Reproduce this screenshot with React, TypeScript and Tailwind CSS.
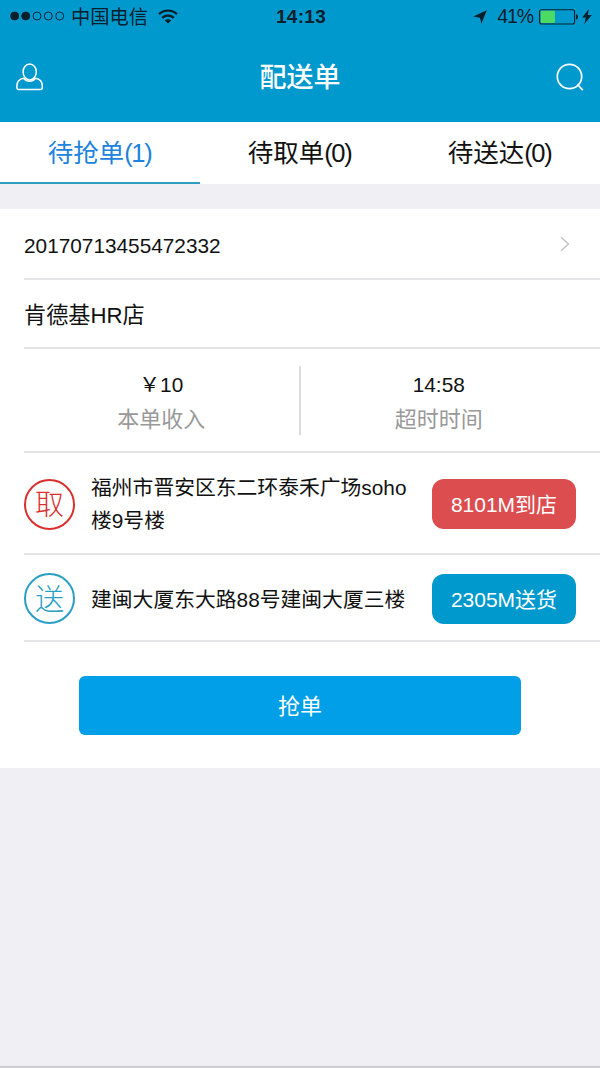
import type { ReactNode } from "react";

const tabs = [
    { name: "待抢单", count: 1 },
    { name: "待取单", count: 0 },
    { name: "待送达", count: 0 },
];

function StatusBar() {
    return (
        <div className="h-[33px] flex flex-row items-center justify-between pl-[10px] pr-[8px] text-[#06202c]">
            <div className="flex-1 flex flex-row items-center">
                <svg width="56" height="12" viewBox="0 0 56 12" fill="none" stroke="currentColor" strokeWidth="0.9">
                    <circle cx="4.7" cy="6" r="4" fill="currentColor" />
                    <circle cx="15.7" cy="6" r="4" fill="currentColor" />
                    <circle cx="27" cy="6" r="4" />
                    <circle cx="38.3" cy="6" r="4" />
                    <circle cx="49.7" cy="6" r="4" />
                </svg>
                <span className="ml-[5px] pt-[2px] text-[19.3px] leading-none">中国电信</span>
                <svg className="ml-[10px]" width="20" height="15" viewBox="0 0 20 15" fill="none" stroke="currentColor" strokeWidth="2.4">
                    <path d="M1 5.2C6 .4 14 .4 19 5.2" />
                    <path d="M4.2 8.8c3.3-3.1 8.3-3.1 11.6 0" />
                    <path d="M10 14.6l-3.2-3.2c1.8-1.7 4.6-1.7 6.4 0z" fill="currentColor" stroke="none" />
                </svg>
            </div>
            <span className="text-[19px] leading-none font-bold tracking-[0.3px]">14:13</span>
            <div className="flex-1 flex flex-row items-center justify-end">
                <svg width="14" height="14" viewBox="0 0 14 14" fill="currentColor">
                    <path d="M13.8.2L8.4 13.8 7 7.8.2 6.4z" />
                </svg>
                <span className="ml-[10px] pt-px text-[19.5px] leading-none tracking-[-1.1px]">41%</span>
                <svg className="ml-[6px]" width="40" height="16" viewBox="0 0 40 16">
                    <rect x="0.6" y="0.8" width="35" height="14.2" rx="2" fill="none" stroke="currentColor" strokeWidth="1.1" />
                    <rect x="1.7" y="1.8" width="14.3" height="12.2" rx="1" fill="#4cd964" />
                    <path d="M37 5.2c2.6 0 2.6 5.4 0 5.4z" fill="currentColor" />
                </svg>
                <svg className="ml-[3px]" width="10" height="15" viewBox="0 0 10 15" fill="currentColor">
                    <path d="M6.8.1L.2 8.5h3.6L2.3 14.9 9.8 6H5.8z" />
                </svg>
            </div>
        </div>
    );
}

function Header() {
    return (
        <div className="h-[122px] bg-[#0099ce]">
            <StatusBar />
            <div className="h-[89px] flex flex-row items-center justify-between px-[16px] text-white">
                <svg className="mb-[2px]" width="28" height="28" viewBox="0 0 28 28" fill="none" stroke="currentColor" strokeWidth="1.5" strokeLinejoin="round">
                    <ellipse cx="13.7" cy="8.9" rx="6.6" ry="8" />
                    <path d="M7.7 15.2C3.2 15.9.9 18.6.9 23v1.6c0 1.300.7 2 2 2h21.400c1.300 0 2-.7 2-2V23c0-4.400-2.300-7.100-6.800-7.800-3 4-8.700 4-11.800 0z" />
                </svg>
                <h1 className="pt-[2px] text-[27px] leading-none font-medium">配送单</h1>
                <svg className="mb-[2px]" width="28" height="28" viewBox="0 0 28 28" fill="none" stroke="currentColor" strokeWidth="1.7">
                    <circle cx="13.5" cy="13.5" r="12.2" />
                    <path d="M21.500 21.500l5.300 5.600" />
                </svg>
            </div>
        </div>
    );
}

function Row({ className, children }: { className: string; children: ReactNode }) {
    return (
        <div className={`ml-[24px] pr-[24px] flex flex-row items-center border-b-2 border-[#e4e4e6] ${className}`}>
            {children}
        </div>
    );
}

function Stat({ value, label }: { value: string; label: string }) {
    return (
        <div className="flex-1 flex flex-col items-center pt-[5px]">
            <p className="text-[20.8px] leading-[34px]">{value}</p>
            <p className="pt-px text-[22px] leading-[34px] text-[#999999]">{label}</p>
        </div>
    );
}

export default function App() {
    return (
        <div className="w-[600px] h-[1068px] flex flex-col bg-[#efeff4] border-b-2 border-[#cbcbd0] text-[#111111] font-['Liberation_Sans','Noto_Sans_CJK_SC',sans-serif]">
            <Header />

            <div className="h-[62px] flex flex-row bg-white">
                {tabs.map((tab, i) => (
                    <div
                        key={tab.name}
                        className={`flex-1 flex flex-row items-center justify-center pt-[4px] pr-px border-b-2 text-[25.5px] leading-none ${i === 0 ? "text-[#1d83dc] border-[#2f9dbf]" : "border-white"}`}
                    >
                        <span>{tab.name}</span>
                        <span className="tracking-[-1.4px]">({tab.count})</span>
                    </div>
                ))}
            </div>

            <div className="mt-[25px] h-[559px] bg-white flex flex-col">
                <Row className="h-[71px] justify-between">
                    <span className="pt-[4px] text-[20.8px]">20170713455472332</span>
                    <svg className="mr-[6px]" width="10" height="16" viewBox="0 0 10 16" fill="none" stroke="#c4c4c8" strokeWidth="1.5">
                        <path d="M1 1.2l7.5 6.800L1 14.800" />
                    </svg>
                </Row>
                <Row className="h-[69px]">
                    <span className="pt-[5px] text-[22.2px]">肯德基HR店</span>
                </Row>
                <Row className="h-[104px]">
                    <Stat value="￥10" label="本单收入" />
                    <div className="w-[2px] h-[69px] mr-px mt-px bg-[#dcdcde]" />
                    <Stat value="14:58" label="超时时间" />
                </Row>
                <Row className="h-[102px]">
                    <div className="w-[51px] h-[51px] mt-[2px] shrink-0 rounded-full border-2 border-[#d9302f] text-[#d9302f] text-[29px] font-light leading-none flex items-center justify-center pt-[3px]">取</div>
                    <p className="ml-[16px] pt-[2px] w-[320px] text-[20.8px] leading-[33px]">福州市晋安区东二环泰禾广场soho楼9号楼</p>
                    <button type="button" className="ml-auto mt-[2px] pt-px w-[144px] h-[50px] shrink-0 rounded-[12px] bg-[#db4d4f] text-white text-[21px] leading-none">8101M到店</button>
                </Row>
                <Row className="h-[87px]">
                    <div className="w-[51px] h-[51px] mt-[2px] shrink-0 rounded-full border-2 border-[#2a9fc4] text-[#2a9fc4] text-[29px] font-light leading-none flex items-center justify-center pt-[3px]">送</div>
                    <p className="ml-[16px] pt-[3px] w-[320px] text-[20.8px] leading-[33px]">建闽大厦东大路88号建闽大厦三楼</p>
                    <button type="button" className="ml-auto mt-[2px] pt-px w-[144px] h-[50px] shrink-0 rounded-[12px] bg-[#0099ce] text-white text-[21px] leading-none">2305M送货</button>
                </Row>
                <button type="button" className="mt-[34px] pt-[2px] mx-auto w-[442px] h-[59px] rounded-[6px] bg-[#019fe8] text-white text-[22px] leading-none">抢单</button>
            </div>
        </div>
    );
}
